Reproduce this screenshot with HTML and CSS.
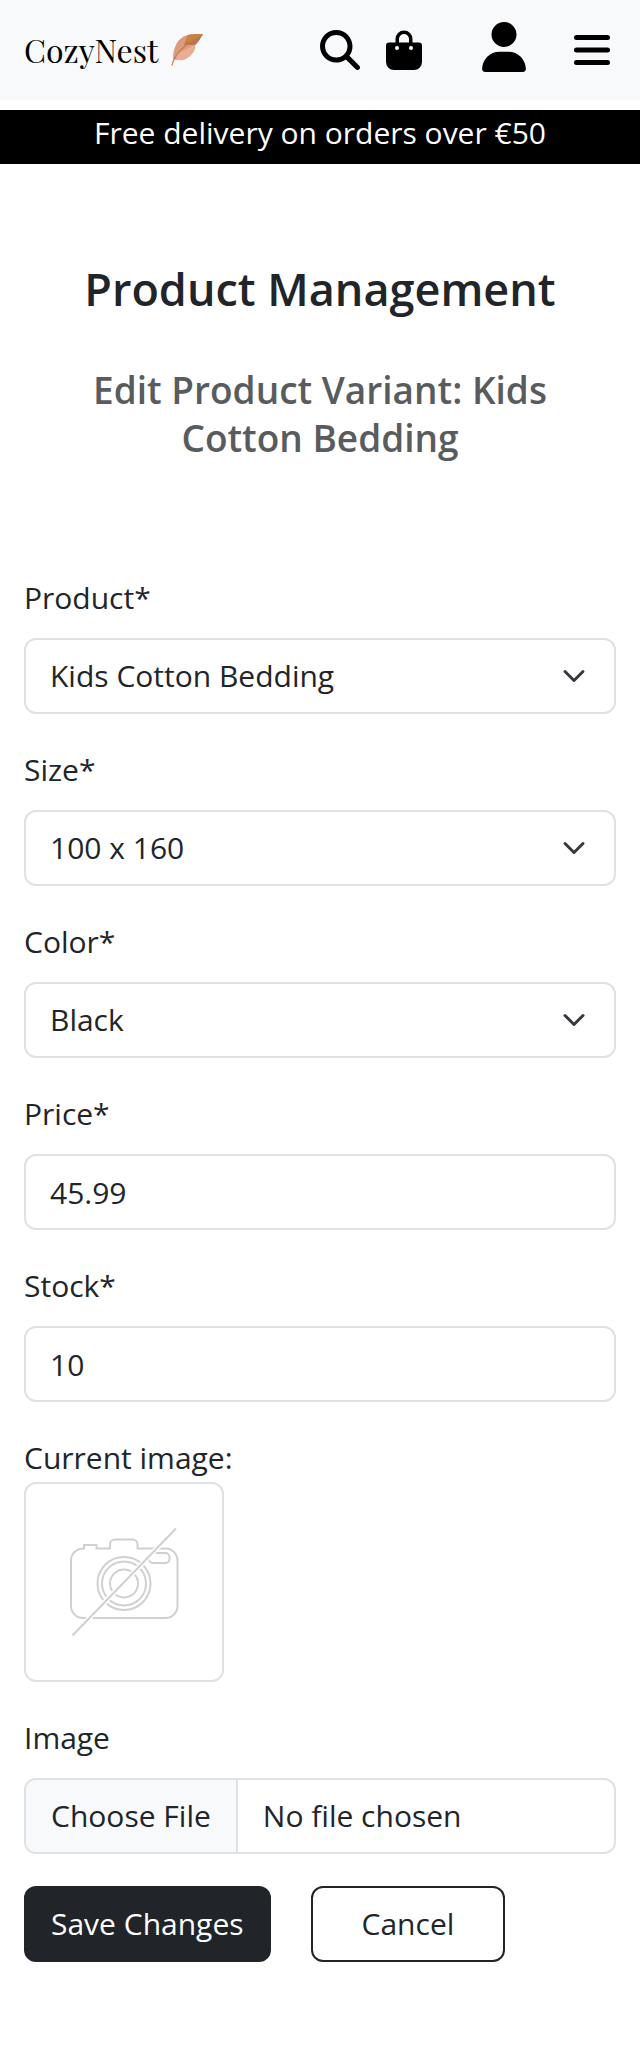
FILE: index.html
```html
<!DOCTYPE html>
<html lang="en">
<head>
<meta charset="utf-8">
<meta name="viewport" content="width=device-width, initial-scale=1">
<title>CozyNest - Product Management</title>
<link rel="stylesheet" href="styles.css">
</head>
<body>
<header class="navbar">
  <a class="brand" href="#">CozyNest
    <svg class="brand-leaf" viewBox="0 0 32 32" aria-hidden="true">
      <path d="M2 25C2 13 7 3 17 1c5-1 10-1 15-.5C29 4 28 8 24 11c1 4-2 8-5 11-3 2-5 4-9 4H5z" fill="#dc9b7c"/>
      <path d="M17 1c5-1 10-1 15-.5C29 4 28 8 24 11l-11 0z" fill="#b87552"/>
      <path d="M17 1c5-1 10-1 15-.5L22 7l-8 2z" fill="#ca8240"/>
      <path d="M6 20l15-8 3-1c0 4-2 8-5 11-3 2-5 4-9 4H5z" fill="#e9ac94"/>
      <path d="M1 31.500C3 21 14 10 31 1" fill="none" stroke="#c67a48" stroke-width="1.300"/>
    </svg>
  </a>
  <nav class="nav-icons" aria-label="Main">
    <button class="icon-btn" type="button" aria-label="Search">
      <svg class="icon-search" viewBox="0 0 512 512"><path d="M416 208c0 45.900-14.900 88.300-40 122.700L502.600 457.400c12.500 12.500 12.500 32.800 0 45.300s-32.800 12.500-45.300 0L330.700 376c-34.400 25.200-76.800 40-122.700 40C93.100 416 0 322.900 0 208S93.100 0 208 0S416 93.100 416 208zM208 352a144 144 0 1 0 0-288 144 144 0 1 0 0 288z"/></svg>
    </button>
    <a class="icon-btn" href="#" aria-label="Shopping bag">
      <svg class="icon-bag" viewBox="0 0 36 40"><path fill-rule="evenodd" d="M9.500 12.500V9a8.500 8.500 0 0 1 17 0v3.500H33a3 3 0 0 1 3 3V32a8 8 0 0 1-8 8H8a8 8 0 0 1-8-8V15.500a3 3 0 0 1 3-3zM13 12.500h10V9a5 5 0 0 0-10 0zM11 16a2 2 0 1 0 0 4 2 2 0 0 0 0-4zm14 0a2 2 0 1 0 0 4 2 2 0 0 0 0-4z"/></svg>
    </a>
    <a class="icon-btn account" href="#" aria-label="Account">
      <svg class="icon-user" viewBox="0 0 448 512"><path d="M224 256A128 128 0 1 0 224 0a128 128 0 1 0 0 256zm-45.700 48C79.800 304 0 383.800 0 482.300C0 498.700 13.300 512 29.700 512H418.300c16.400 0 29.700-13.300 29.700-29.700C448 383.800 368.200 304 269.700 304H178.300z"/></svg>
    </a>
    <button class="icon-btn toggler" type="button" aria-label="Menu">
      <svg class="icon-bars" viewBox="0 0 36 30"><path d="M2.500 2.500h31M2.500 15h31M2.500 27.500h31" stroke="#000" stroke-width="5" stroke-linecap="round"/></svg>
    </button>
  </nav>
</header>
<p class="banner">Free delivery on orders over €50</p>
<main class="page">
  <div class="headings">
    <h1>Product Management</h1>
    <h2>Edit Product Variant: Kids Cotton Bedding</h2>
  </div>
  <form class="form">
    <div class="field">
      <label for="product">Product*</label>
      <select class="control select" id="product"><option>Kids Cotton Bedding</option></select>
    </div>
    <div class="field">
      <label for="size">Size*</label>
      <select class="control select" id="size"><option>100 x 160</option></select>
    </div>
    <div class="field">
      <label for="color">Color*</label>
      <select class="control select" id="color"><option>Black</option></select>
    </div>
    <div class="field">
      <label for="price">Price*</label>
      <input class="control" id="price" type="text" inputmode="decimal" value="45.99">
    </div>
    <div class="field">
      <label for="stock">Stock*</label>
      <input class="control" id="stock" type="text" inputmode="numeric" value="10">
    </div>
    <div class="current">
      <p>Current image:</p>
      <svg class="thumb" viewBox="2 2 196 196" role="img" aria-label="No image available" fill="none" stroke="#d0d0d0" stroke-width="2">
        <path d="M60 66.500H59A12 12 0 0 0 47 78.500V124a12 12 0 0 0 12 12h82.500a12 12 0 0 0 12-12V78.500a12 12 0 0 0-12-12H113.500V62.500a5 5 0 0 0-5-5H91a5 5 0 0 0-5 5v4H72.500V63H60z"/>
        <rect x="125" y="71" width="20.500" height="10" rx="4"/>
        <circle cx="100" cy="101.500" r="26.500"/>
        <circle cx="100" cy="101.500" r="22"/>
        <circle cx="100" cy="101.500" r="14"/>
        <path d="M48.500 153.500L152 46.500" stroke="#fff" stroke-width="5"/>
        <path d="M48.500 153.500L152 46.500"/>
      </svg>
    </div>
    <div class="field">
      <label for="image">Image</label>
      <input class="control file" id="image" type="file">
    </div>
    <div class="actions">
      <button class="btn btn-dark" type="submit">Save Changes</button>
      <a class="btn btn-outline" href="#">Cancel</a>
    </div>
  </form>
</main>
</body>
</html>
```
FILE: styles.css
```css
* {
  box-sizing: border-box;
}

body {
  margin: 0;
  background: #fff;
  color: #212529;
  font-family: "Segoe UI", "Open Sans", "Noto Sans", sans-serif;
  font-size: 30px;
  line-height: 48px;
}

p, h1, h2 {
  margin: 0;
}

.navbar {
  display: flex;
  align-items: center;
  justify-content: space-between;
  height: 100px;
  padding: 0 30px 0 24px;
  background: #f8f9fb;
}

.brand {
  display: flex;
  align-items: center;
  gap: 13px;
  color: #000;
  font-family: "Playfair Display", "Liberation Serif", serif;
  font-size: 32px;
  text-decoration: none;
}

.brand-leaf {
  width: 32px;
  height: 32px;
}

.nav-icons {
  display: flex;
  align-items: center;
  gap: 26px;
}

.icon-btn {
  display: flex;
  padding: 0;
  border: 0;
  background: none;
}

.icon-search {
  width: 40px;
  height: 40px;
}

.icon-bag {
  width: 36px;
  height: 40px;
}

.icon-user {
  width: 44px;
  height: 50px;
}

.icon-bars {
  width: 36px;
  height: 30px;
}

.account {
  margin-left: 34px;
  padding-bottom: 6px;
}

.toggler {
  margin-left: 22px;
}

.banner {
  margin-top: 10px;
  padding-bottom: 8px;
  background: #000;
  color: #fff;
  line-height: 46px;
  text-align: center;
}

.page {
  padding: 96px 24px;
}

.headings {
  padding: 0 24px;
  text-align: center;
}

h1 {
  font-size: 45px;
  font-weight: 600;
  line-height: 58px;
}

h2 {
  margin-top: 48px;
  color: #595c5f;
  font-size: 37px;
  font-weight: 600;
  line-height: 48px;
}

.form {
  display: flex;
  flex-direction: column;
  gap: 32px;
  margin-top: 112px;
}

.field {
  display: flex;
  flex-direction: column;
  gap: 16px;
}

.control {
  width: 100%;
  height: 76px;
  padding: 12px 24px;
  border: 2px solid #dee2e6;
  border-radius: 12px;
  background: #fff;
  color: #212529;
  font: inherit;
}

.select {
  appearance: none;
  background: #fff url("data:image/svg+xml,%3Csvg xmlns='http://www.w3.org/2000/svg' viewBox='0 0 16 16'%3E%3Cpath fill='none' stroke='%23343a40' stroke-linecap='round' stroke-linejoin='round' stroke-width='2' d='m2 5 6 6 6-6'/%3E%3C/svg%3E") no-repeat right 24px center / 32px 24px;
}

.file {
  overflow: hidden;
  padding: 0;
  line-height: 72px;
}

.file::file-selector-button {
  height: 72px;
  margin: 0 25px 0 0;
  padding: 0 25px;
  border: 0;
  border-right: 2px solid #dee2e6;
  background: #f8f9fa;
  color: #212529;
  font: inherit;
}

.thumb {
  display: block;
  width: 200px;
  height: 200px;
  border: 2px solid #dee2e6;
  border-radius: 12px;
}

.actions {
  display: flex;
  gap: 40px;
}

.btn {
  padding: 12px 25px;
  border: 2px solid #212529;
  border-radius: 12px;
  font: inherit;
  text-decoration: none;
}

.btn-dark {
  background: #212529;
  color: #fff;
}

.btn-outline {
  padding: 12px 49px;
  color: #212529;
}
```
